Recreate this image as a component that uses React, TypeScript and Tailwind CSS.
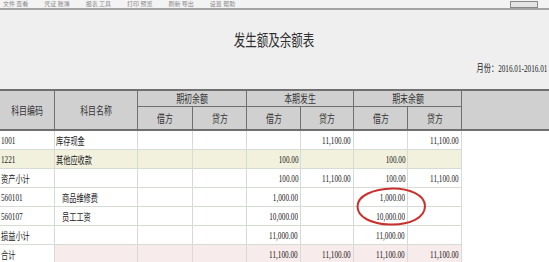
import React from "react";

const cols = "grid grid-cols-[55px_83px_55px_54px_54px_53px_54px_54px_1fr]";

type Row = {
  code: string;
  name?: string;
  indent?: boolean;
  v: string[];
  tone?: "yellow" | "pink";
};

const rows: Row[] = [
  { code: "1001", name: "库存现金", v: ["", "", "", "11,100.00", "", "11,100.00"] },
  { code: "1221", name: "其他应收款", v: ["", "", "100.00", "", "100.00", ""], tone: "yellow" },
  { code: "资产小计", v: ["", "", "100.00", "11,100.00", "100.00", "11,100.00"] },
  { code: "560101", name: "商品维修费", indent: true, v: ["", "", "1,000.00", "", "1,000.00", ""] },
  { code: "560107", name: "员工工资", indent: true, v: ["", "", "10,000.00", "", "10,000.00", ""] },
  { code: "损益小计", v: ["", "", "11,000.00", "", "11,000.00", ""] },
  { code: "合计", v: ["", "", "11,100.00", "11,100.00", "11,100.00", "11,100.00"], tone: "pink" },
];

function Sq({ children, align = "left" }: { children: React.ReactNode; align?: "left" | "right" | "center" }) {
  const origin = align === "left" ? "origin-left" : align === "right" ? "origin-right" : "origin-center";
  return <span className={`inline-block whitespace-nowrap scale-x-[0.72] ${origin}`}>{children}</span>;
}

function HeadCell({ children, className = "" }: { children?: React.ReactNode; className?: string }) {
  return (
    <div className={`flex items-center justify-center border-r border-[#6f6f6f] text-[11px] text-[#333] ${className}`}>
      {children && <Sq align="center">{children}</Sq>}
    </div>
  );
}

export default function App() {
  return (
    <div className="w-[549px] h-[262px] overflow-hidden bg-white font-['Noto_Sans_CJK_SC',sans-serif]">
      {/* menu strip */}
      <div className="h-[8px] bg-[#f3f3f3] flex items-center gap-[16px] px-[3px] text-[6px] leading-[8px] text-[#8a8a8a]">
        <span>文件 查看</span>
        <span>凭证 账簿</span>
        <span>报表 工具</span>
        <span>打印 预览</span>
        <span>刷新 导出</span>
        <span>设置 帮助</span>
        <span className="ml-auto mr-[8px] h-[7px] w-[28px] border border-[#888] bg-[#e4e4e4]" />
      </div>
      <div className="h-[2px] bg-[#a4a4a4]" />

      {/* title area */}
      <div className="h-[79px] bg-[#efefef] flex flex-col">
        <div className="pt-[19px] h-[39px] flex justify-center text-[16px] leading-[20px] text-[#2e2e2e]">
          <Sq align="center">发生额及余额表</Sq>
        </div>
        <div className="mt-[12px] flex justify-end pr-[2px] text-[10px] leading-[14px] text-[#222]">
          <Sq align="right">
            月份：<span className="font-['Liberation_Serif',serif]">2016.01-2016.01</span>
          </Sq>
        </div>
      </div>

      {/* table header */}
      <div className={`${cols} grid-rows-[16px_22px] border-t-2 border-b-2 border-[#6f6f6f] bg-[#d0d0d0]`}>
        <HeadCell className="row-span-2">科目编码</HeadCell>
        <HeadCell className="row-span-2">科目名称</HeadCell>
        <HeadCell className="col-span-2 border-b">期初余额</HeadCell>
        <HeadCell className="col-span-2 border-b">本期发生</HeadCell>
        <HeadCell className="col-span-2 border-b">期末余额</HeadCell>
        <div className="row-span-2" />
        <HeadCell>借方</HeadCell>
        <HeadCell>贷方</HeadCell>
        <HeadCell>借方</HeadCell>
        <HeadCell>贷方</HeadCell>
        <HeadCell>借方</HeadCell>
        <HeadCell>贷方</HeadCell>
      </div>

      {/* table body */}
      <div className="relative">
        {rows.map((r) => {
          const bg = r.tone === "yellow" ? "bg-[#f1f1de]" : r.tone === "pink" ? "bg-[#f8ebeb]" : "bg-white";
          return (
            <div key={r.code} className={`${cols} h-[19px] text-[10px] text-[#1a1a1a]`}>
              <div
                className={`flex items-center pl-[1px] border-r border-b border-[#d6dbd6] ${
                  r.tone === "yellow" ? bg : "bg-white"
                } ${/^\d/.test(r.code) ? "font-['Liberation_Serif',serif]" : ""}`}
              >
                <Sq>{r.code}</Sq>
              </div>
              <div
                className={`flex items-center border-r border-b border-[#d6dbd6] ${bg} ${
                  r.indent ? "pl-[7px]" : "pl-[1px]"
                }`}
              >
                {r.name && <Sq>{r.name}</Sq>}
              </div>
              {r.v.map((val, i) => (
                <div
                  key={i}
                  className={`flex items-center justify-end pr-[2px] border-r border-b border-[#d6dbd6] font-['Liberation_Serif',serif] ${bg}`}
                >
                  {val && <Sq align="right">{val}</Sq>}
                </div>
              ))}
              <div className="bg-white" />
            </div>
          );
        })}

        {/* hand-drawn annotation */}
        <svg
          className="absolute left-[355px] top-[55px] w-[72px] h-[41px] pointer-events-none"
          viewBox="0 0 72 41"
        >
          <path
            d="M36 2.5 C54 2 70 9 70 20 C70 32 55 39 35 38.5 C16 38 2.5 31 2.5 20.5 C2.5 10 17 3 38 2.5"
            fill="none"
            stroke="#c9312e"
            strokeWidth="2"
          />
        </svg>
      </div>
    </div>
  );
}
